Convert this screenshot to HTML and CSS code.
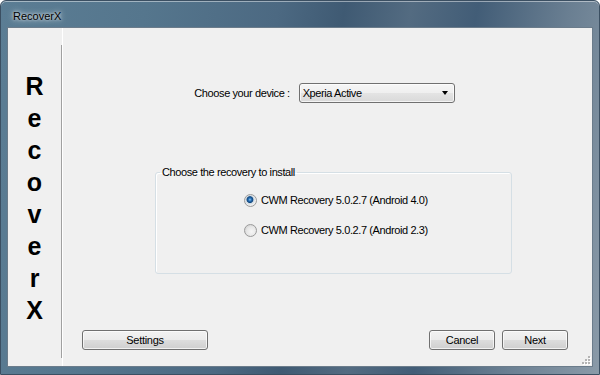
FILE: index.html
```html
<!DOCTYPE html>
<html lang="en">

<head>
    <meta charset="UTF-8">
    <meta name="viewport" content="width=device-width, initial-scale=1.0">
    <title>RecoverX</title>
    <link rel="stylesheet" href="styles.css">
</head>

<body>
    <div class="window">
        <div class="titlebar">RecoverX</div>
        <div class="client">
            <div class="brand">
                <span>R</span>
                <span>e</span>
                <span>c</span>
                <span>o</span>
                <span>v</span>
                <span>e</span>
                <span>r</span>
                <span>X</span>
            </div>
            <div class="main">
                <div class="device-row">
                    <label for="device">Choose your device :</label>
                    <div class="combo" id="device">
                        <span>Xperia Active</span>
                        <span class="arrow"></span>
                    </div>
                </div>
                <fieldset class="recovery">
                    <legend>Choose the recovery to install</legend>
                    <label class="option"><input type="radio" name="recovery" checked>CWM Recovery 5.0.2.7 (Android 4.0)</label>
                    <label class="option"><input type="radio" name="recovery">CWM Recovery 5.0.2.7 (Android 2.3)</label>
                </fieldset>
                <div class="buttons">
                    <button class="btn btn-wide">Settings</button>
                    <span class="spacer"></span>
                    <button class="btn">Cancel</button>
                    <button class="btn">Next</button>
                </div>
            </div>
            <!-- size grip -->
            <svg class="grip" width="10" height="10" viewBox="0 0 10 10">
                <g fill="#fff">
                    <rect x="8" y="2" width="2" height="2" />
                    <rect x="8" y="5" width="2" height="2" />
                    <rect x="5" y="5" width="2" height="2" />
                    <rect x="8" y="8" width="2" height="2" />
                    <rect x="5" y="8" width="2" height="2" />
                    <rect x="2" y="8" width="2" height="2" />
                </g>
                <g fill="#b4b4b4">
                    <rect x="7" y="1" width="2" height="2" />
                    <rect x="7" y="4" width="2" height="2" />
                    <rect x="4" y="4" width="2" height="2" />
                    <rect x="7" y="7" width="2" height="2" />
                    <rect x="4" y="7" width="2" height="2" />
                    <rect x="1" y="7" width="2" height="2" />
                </g>
            </svg>
        </div>
    </div>
</body>

</html>
```

FILE: styles.css
```css
body {
    margin: 0;
    font-family: "Liberation Sans", Arial, sans-serif;
    font-size: 11px;
    color: #000;
}

.window {
    width: 600px;
    height: 375px;
    box-sizing: border-box;
    border: 1px solid #3b4f62;
    border-radius: 6px 6px 0 0;
    padding: 0 6px 7px;
    display: flex;
    flex-direction: column;
    background: linear-gradient(100deg, #5b7d94 0%, #55768d 22%, #4c6982 42%, #3f5a73 52%, #536b81 62%, #425d77 72%, #6a7f92 86%, #8a9aa8 100%);
    box-shadow: inset 0 1px 0 rgba(255, 255, 255, 0.45);
}

.titlebar {
    height: 26px;
    box-sizing: border-box;
    padding: 4px 0 0 6px;
    line-height: 22px;
    font-size: 11px;
    text-shadow: 0 0 6px rgba(255, 255, 255, 0.9), 0 0 3px rgba(255, 255, 255, 0.8);
}

.client {
    flex: 1;
    display: flex;
    position: relative;
    background-color: #f0f0f0;
    border: 1px solid #6b7c8b;
}

.brand {
    width: 53px;
    margin: 17px 0 8px;
    padding-top: 25px;
    border-right: 1px solid #a0a0a0;
    display: flex;
    flex-direction: column;
    align-items: center;
    font-size: 25px;
    font-weight: bold;
    line-height: 32px;
}

.main {
    flex: 1;
    display: flex;
    flex-direction: column;
    border-left: 1px solid #fff;
}

.device-row {
    margin: 55px 6px 0 0;
    display: flex;
    align-items: center;
    justify-content: center;
    gap: 9px;
    letter-spacing: -0.4px;
}

.combo {
    width: 156px;
    height: 20px;
    box-sizing: border-box;
    border: 1px solid #707070;
    border-radius: 3px;
    padding: 0 6px 0 3px;
    display: flex;
    align-items: center;
    background: linear-gradient(#f6f6f6, #efefef 50%, #e4e4e4 50%, #d9d9d9);
    box-shadow: inset 0 0 0 1px rgba(255, 255, 255, 0.7);
}

.arrow {
    margin-left: auto;
    border-top: 4px solid #000;
    border-left: 3.5px solid transparent;
    border-right: 3.5px solid transparent;
}

.recovery {
    margin: 63px 0 0 92px;
    padding: 0;
    width: 357px;
    height: 108px;
    box-sizing: border-box;
    border: 1px solid #d5dfe5;
    border-radius: 3px;
    box-shadow: inset 1px 1px 0 #fff;
    letter-spacing: -0.4px;
}

.recovery legend {
    margin-left: 4px;
    padding: 0 2px;
    line-height: 13px;
}

.option {
    display: flex;
    align-items: center;
    height: 16px;
    margin: 13px 0 0 88px;
}

.option + .option {
    margin-top: 14px;
}

.option input {
    appearance: none;
    width: 13px;
    height: 13px;
    margin: 0 4px 0 0;
    box-sizing: border-box;
    border: 1px solid #9a9a9a;
    border-radius: 50%;
    background: radial-gradient(circle at 60% 60%, #f6f6f6 0, #e6e6e6 5px, #dcdcdc 6px);
}

.option input:checked {
    background: radial-gradient(circle at 45% 42%, #8fcaf2 0, #2a72b8 1.5px, #10467e 3px, #cfd9e0 3.8px, #eeeeee 5.5px);
}

.buttons {
    margin: auto 0 16px;
    padding: 0 24px 0 19px;
    display: flex;
    gap: 7px;
}

.spacer {
    flex: 1;
}

.btn {
    width: 66px;
    height: 20px;
    padding: 0;
    font-family: inherit;
    font-size: 11px;
    letter-spacing: -0.3px;
    color: #000;
    border: 1px solid #707070;
    border-radius: 3px;
    background: linear-gradient(#f2f2f2, #ebebeb 50%, #dddddd 50%, #cfcfcf);
    box-shadow: inset 0 0 0 1px rgba(255, 255, 255, 0.7);
}

.btn-wide {
    width: 126px;
}

.grip {
    position: absolute;
    right: 1px;
    bottom: 1px;
}
```
